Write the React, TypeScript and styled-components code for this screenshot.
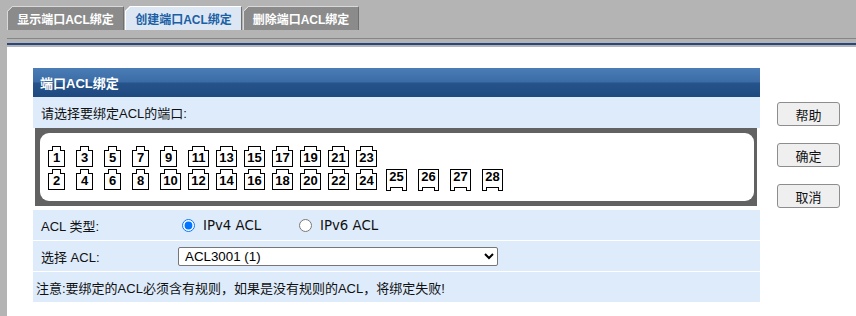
import React from "react";
import styled, { createGlobalStyle } from "styled-components";

const GlobalStyle = createGlobalStyle`
  html, body { margin: 0; padding: 0; height: 100%; background: #b4b4b4; }
  #root { min-height: 100%; }
`;

const CJK = `"Liberation Sans", "Noto Sans CJK SC", sans-serif`;

const Page = styled.div`
  min-height: 316px;
  display: flex;
  flex-direction: column;
  font-family: ${CJK};
`;

const TabBar = styled.div`
  display: flex;
  gap: 1px;
  height: 38px;
  box-sizing: border-box;
  padding: 6px 0 0 7px;
`;

const Tab = styled.div<{ $active?: boolean; $w: number }>`
  box-sizing: border-box;
  width: ${(p) => p.$w}px;
  height: 24px;
  display: flex;
  align-items: center;
  justify-content: center;
  font: bold 12px ${CJK};
  color: ${(p) => (p.$active ? "#1b60a5" : "#ffffff")};
  border-top: 1px solid ${(p) => (p.$active ? "#ffffff" : "#d9d9d9")};
  border-left: 1px solid ${(p) => (p.$active ? "#ffffff" : "#d9d9d9")};
  border-right: 1px solid #707070;
  background: linear-gradient(
        135deg,
        transparent 3.4px,
        ${(p) => (p.$active ? "#ffffff" : "#d9d9d9")} 3.4px,
        ${(p) => (p.$active ? "#ffffff" : "#d9d9d9")} 4.8px,
        transparent 4.8px
      )
      0 0 / 8px 8px no-repeat border-box,
    ${(p) => (p.$active ? "#dde7f3" : "#8b8b8b")};
  clip-path: polygon(5px 0, 100% 0, 100% 100%, 0 100%, 0 5px);
`;

const Frame = styled.div`
  flex: 1;
  display: flex;
  flex-direction: column;
  margin-left: 7px;
  border-top: 1px solid #868686;
  padding-top: 4px;
`;

const BlueRule = styled.div`
  height: 2px;
  background: #28467f;
  margin-bottom: 2px;
`;

const Content = styled.div`
  flex: 1;
  background: #ffffff;
  display: flex;
  align-items: flex-start;
  padding: 21px 0 0 26px;
`;

const Panel = styled.div`
  width: 727px;
  display: flex;
  flex-direction: column;
`;

const PanelHeader = styled.div`
  height: 29px;
  display: flex;
  align-items: center;
  padding-left: 7px;
  color: #ffffff;
  font: bold 13px ${CJK};
  background: linear-gradient(#4a7cb5 0%, #3b6ca6 48%, #26538b 52%, #1e4a80 100%);
`;

const InfoRow = styled.div`
  height: 31px;
  display: flex;
  align-items: center;
  padding-left: 8px;
  background: #ddebfb;
  font-size: 13px;
  color: #111;
`;

const PortFrame = styled.div`
  height: 78px;
  box-sizing: border-box;
  margin: 0 3px 4px 2px;
  padding: 5px 3px 5px 5px;
  background: #626262;
  display: flex;
`;

const PortInner = styled.div`
  flex: 1;
  background: #ffffff;
  border-radius: 9px;
  padding: 13px 0 0 8px;
  display: flex;
  flex-direction: column;
  gap: 2px;
`;

const PortRow = styled.div`
  display: flex;
  align-items: flex-start;
`;

const PortCell = styled.div<{ $w: number; $gap?: number }>`
  width: ${(p) => p.$w}px;
  margin-left: ${(p) => p.$gap ?? 0}px;
  flex: none;
  display: flex;
`;

const Port = styled.span<{ $w: number; $sfp?: boolean }>`
  position: relative;
  box-sizing: border-box;
  width: ${(p) => p.$w}px;
  height: ${(p) => (p.$sfp ? 22 : 17)}px;
  margin-top: ${(p) => (p.$sfp ? 0 : 4)}px;
  padding-top: ${(p) => (p.$sfp ? 1 : 1)}px;
  border: 1px solid #000;
  background: #fff;
  display: flex;
  justify-content: center;
  font: bold 13px "Liberation Sans", Arial, sans-serif;
  line-height: 12px;
  color: #000;

  &::before {
    content: "";
    position: absolute;
    box-sizing: border-box;
    left: 3px;
    right: 3px;
    ${(p) =>
      p.$sfp
        ? `bottom: -1px; height: 4px;`
        : `top: -5px; height: 5px;`}
    border: 1px solid #000;
    border-bottom: none;
    background: #fff;
  }
`;

const FieldRow = styled.div<{ $first?: boolean }>`
  height: 30px;
  margin-top: ${(p) => (p.$first ? 0 : 1)}px;
  display: grid;
  grid-template-columns: 144px 1fr;
  align-items: center;
  background: #ddebfb;
  font-size: 13px;
  color: #111;
`;

const FieldLabel = styled.div`
  padding-left: 8px;
`;

const RadioGroup = styled.div`
  display: grid;
  grid-template-columns: 117px auto;
  align-items: center;
`;

const RadioOption = styled.label`
  display: inline-flex;
  align-items: center;
  font: 13.33px "DejaVu Sans", Verdana, sans-serif;
  color: #111;

  input {
    width: 13px;
    height: 13px;
    margin: 0 8px 0 5px;
  }
`;

const Select = styled.select`
  width: 320px;
  height: 19px;
  margin-left: 1px;
  box-sizing: border-box;
  font: 13.33px "Liberation Sans", Arial, sans-serif;
  color: #000;
  border: 1px solid #767676;
  border-radius: 2px;
  background: #fff;
  padding: 0 0 0 2px;
`;

const NoteRow = styled.div`
  height: 30px;
  margin-top: 1px;
  display: flex;
  align-items: center;
  padding-left: 3px;
  background: #ddebfb;
  font-size: 13px;
  color: #111;
`;

const ButtonColumn = styled.div`
  display: flex;
  flex-direction: column;
  gap: 17px;
  margin: 34px 0 0 17px;
`;

const Button = styled.button`
  width: 63px;
  height: 24px;
  box-sizing: border-box;
  padding: 0;
  background: #efefef;
  border: 1px solid #8d8d8d;
  border-radius: 3px;
  font: 13px ${CJK};
  color: #111;
`;

const topPorts = Array.from({ length: 12 }, (_, i) => i * 2 + 1);
const bottomPorts = Array.from({ length: 12 }, (_, i) => i * 2 + 2);
const sfpPorts = [25, 26, 27, 28];

export default function App() {
  return (
    <Page>
      <GlobalStyle />
      <TabBar>
        <Tab $w={117}>显示端口ACL绑定</Tab>
        <Tab $w={117} $active>
          创建端口ACL绑定
        </Tab>
        <Tab $w={116}>删除端口ACL绑定</Tab>
      </TabBar>
      <Frame>
        <BlueRule />
        <Content>
          <Panel>
            <PanelHeader>端口ACL绑定</PanelHeader>
            <InfoRow>请选择要绑定ACL的端口:</InfoRow>
            <PortFrame>
              <PortInner>
                <PortRow>
                  {topPorts.map((n) => (
                    <PortCell key={n} $w={28}>
                      <Port $w={n < 10 ? 17 : 21}>{n}</Port>
                    </PortCell>
                  ))}
                </PortRow>
                <PortRow>
                  {bottomPorts.map((n) => (
                    <PortCell key={n} $w={28}>
                      <Port $w={n < 10 ? 17 : 21}>{n}</Port>
                    </PortCell>
                  ))}
                  {sfpPorts.map((n, i) => (
                    <PortCell key={n} $w={32} $gap={i === 0 ? 2 : 0}>
                      <Port $w={21} $sfp>
                        {n}
                      </Port>
                    </PortCell>
                  ))}
                </PortRow>
              </PortInner>
            </PortFrame>
            <FieldRow $first>
              <FieldLabel>ACL 类型:</FieldLabel>
              <RadioGroup>
                <RadioOption>
                  <input type="radio" name="acltype" defaultChecked />
                  IPv4 ACL
                </RadioOption>
                <RadioOption>
                  <input type="radio" name="acltype" />
                  IPv6 ACL
                </RadioOption>
              </RadioGroup>
            </FieldRow>
            <FieldRow>
              <FieldLabel>选择 ACL:</FieldLabel>
              <div>
                <Select defaultValue="3001">
                  <option value="3001">ACL3001 (1)</option>
                </Select>
              </div>
            </FieldRow>
            <NoteRow>注意:要绑定的ACL必须含有规则，如果是没有规则的ACL，将绑定失败!</NoteRow>
          </Panel>
          <ButtonColumn>
            <Button>帮助</Button>
            <Button>确定</Button>
            <Button>取消</Button>
          </ButtonColumn>
        </Content>
      </Frame>
    </Page>
  );
}
